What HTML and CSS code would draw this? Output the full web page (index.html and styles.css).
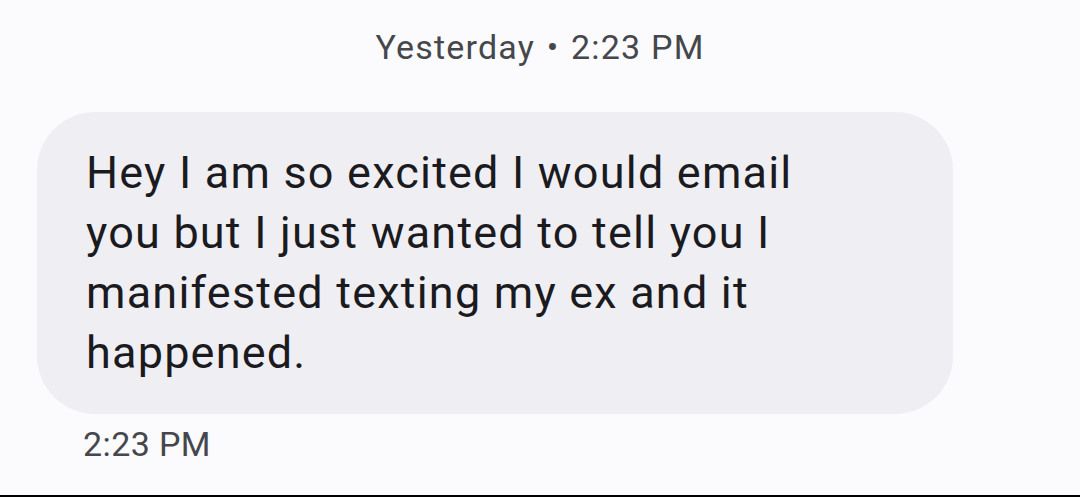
FILE: index.html
```html
<!DOCTYPE html>
<html lang="en">
<head>
<meta charset="utf-8">
<title>Message</title>
<link rel="stylesheet" href="styles.css">
</head>
<body>
<main class="screen">
  <div class="date-header">Yesterday <span class="sep">•</span> 2:23 PM</div>
  <div class="message">
    <div class="bubble">Hey I am so excited I would email you but I just wanted to tell you I manifested texting my ex and it happened.</div>
    <div class="time">2:23 PM</div>
  </div>
</main>
</body>
</html>
```
FILE: styles.css
```css
html, body {
  margin: 0;
  padding: 0;
  background: #fbfbfd;
}
.screen {
  width: 1080px;
  height: 495px;
  border-bottom: 2px solid #000;
  background: #fbfbfd;
  font-family: Roboto, "Noto Sans", sans-serif;
  display: flex;
  flex-direction: column;
  overflow: hidden;
}
.date-header {
  padding-top: 27px;
  text-align: center;
  font-size: 34px;
  line-height: 40px;
  letter-spacing: 1.2px;
  color: #45474c;
}
.date-header .sep {
  padding: 0 2px;
}
.message {
  margin-top: 45px;
  padding-left: 37px;
  display: flex;
  flex-direction: column;
  align-items: flex-start;
}
.bubble {
  width: 790px;
  padding: 31px 77px 31px 49px;
  background: #efeff3;
  border-radius: 58px;
  font-size: 45px;
  line-height: 60px;
  letter-spacing: 1.2px;
  color: #1b1b1f;
}
.time {
  margin-top: 10px;
  padding-left: 46px;
  font-size: 34px;
  line-height: 40px;
  letter-spacing: 0.4px;
  color: #45474c;
}
```
